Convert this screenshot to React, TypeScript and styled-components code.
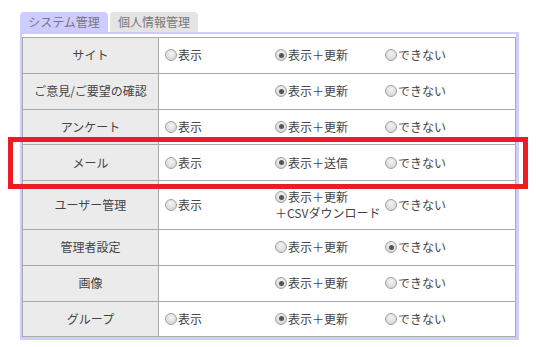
import React from "react"
import styled, { createGlobalStyle } from "styled-components"

const GlobalStyle = createGlobalStyle`
  html, body {
    margin: 0;
    padding: 0;
    background: #fff;
  }
  body {
    font-family: "Noto Sans CJK JP", "Noto Sans", sans-serif;
    font-size: 12px;
    color: #444;
  }
`

const Page = styled.div`
  position: relative;
  width: 536px;
  height: 347px;
  padding: 12px 0 0 20px;
  box-sizing: border-box;
`

const Tabs = styled.div`
  display: flex;
  gap: 2px;
`

const Tab = styled.div<{ active?: boolean }>`
  width: 88px;
  height: 20px;
  box-sizing: border-box;
  padding: 0 8px;
  line-height: 20px;
  font-size: 12px;
  color: #777;
  background: ${(p) => (p.active ? "#ccccff" : "#e4e4e4")};
  border-radius: 4px 4px 0 0;
  text-align: center;
  white-space: nowrap;
`

const Panel = styled.div`
  width: 499px;
  box-sizing: border-box;
  border: solid #ccccff;
  border-width: 2px 3px 3px 2px;
  padding-top: 3px;
`

const Table = styled.div`
  width: 494px;
  border: 1px solid #aaa;
  box-sizing: border-box;
  border-bottom: none;
`

const Row = styled.div`
  display: grid;
  grid-template-columns: 136px 1fr;
  border-bottom: 1px solid #aaa;
`

const Label = styled.div`
  background: #ebebeb;
  border-right: 1px solid #aaa;
  min-height: 34.75px;
  box-sizing: border-box;
  display: flex;
  align-items: center;
  justify-content: center;
  color: #444;
  line-height: 16px;
`

const Options = styled.div`
  display: flex;
  align-items: center;
  padding: 8px 0 8px 6px;
  min-height: 34.75px;
  box-sizing: border-box;
`

const Option = styled.label`
  width: 110px;
  flex: none;
  line-height: 16px;
  color: #444;
  white-space: nowrap;
`

const Radio = styled.span<{ checked?: boolean }>`
  display: inline-block;
  position: relative;
  width: 12px;
  height: 12px;
  box-sizing: border-box;
  border-radius: 50%;
  border: 1px solid #a0a0a0;
  background: radial-gradient(circle at 50% 35%, #f4f4f4 0%, #d6d6d6 80%);
  vertical-align: -1px;
  margin-right: 1px;
  &::after {
    content: "";
    display: ${(p) => (p.checked ? "block" : "none")};
    position: absolute;
    left: 2.5px;
    top: 2.5px;
    width: 5px;
    height: 5px;
    border-radius: 50%;
    background: #555;
  }
`

const Highlight = styled.div`
  position: absolute;
  left: 8px;
  top: 137px;
  width: 520px;
  height: 52px;
  box-sizing: border-box;
  border: 5px solid #ed1c24;
  pointer-events: none;
`

type Perm = {
  name: string
  view: boolean
  edit: React.ReactNode
  none?: boolean
}

const rows: Perm[] = [
  { name: "サイト", view: true, edit: "表示＋更新" },
  { name: "ご意見/ご要望の確認", view: false, edit: "表示＋更新" },
  { name: "アンケート", view: true, edit: "表示＋更新" },
  { name: "メール", view: true, edit: "表示＋送信" },
  {
    name: "ユーザー管理",
    view: true,
    edit: (
      <>
        表示＋更新
        <br />
        ＋CSVダウンロード
      </>
    ),
  },
  { name: "管理者設定", view: false, edit: "表示＋更新", none: true },
  { name: "画像", view: false, edit: "表示＋更新" },
  { name: "グループ", view: true, edit: "表示＋更新" },
]

export default function App() {
  return (
    <>
      <GlobalStyle />
      <Page>
        <Tabs>
          <Tab active>システム管理</Tab>
          <Tab>個人情報管理</Tab>
        </Tabs>
        <Panel>
          <Table>
            {rows.map((r) => (
              <Row key={r.name}>
                <Label>{r.name}</Label>
                <Options>
                  <Option>
                    {r.view && (
                      <>
                        <Radio />
                        表示
                      </>
                    )}
                  </Option>
                  <Option>
                    <Radio checked={!r.none} />
                    {r.edit}
                  </Option>
                  <Option>
                    <Radio checked={r.none} />
                    できない
                  </Option>
                </Options>
              </Row>
            ))}
          </Table>
        </Panel>
        <Highlight />
      </Page>
    </>
  )
}
